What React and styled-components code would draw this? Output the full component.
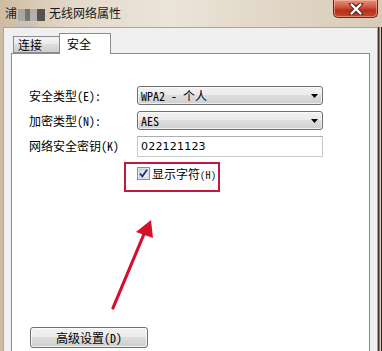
import React from "react";
import styled, { createGlobalStyle } from "styled-components";

const Global = createGlobalStyle`
  html, body { margin: 0; padding: 0; }
  body { width: 382px; height: 351px; overflow: hidden; background: #e2d8ca; }
  * { box-sizing: border-box; }
`;

const FONT = `"Noto Sans Mono CJK SC", "Noto Sans CJK SC", sans-serif`;

const Window = styled.div`
  width: 382px;
  height: 351px;
  display: flex;
  flex-direction: column;
  background: linear-gradient(90deg, #cdbca2 0%, #e4dacb 20%, #ebe4d9 45%, #e0d5c5 75%, #d8cbb8 100%);
  font-family: ${FONT};
  font-size: 12px;
  color: #000;
  overflow: hidden;
`;

const TitleBar = styled.div`
  height: 27px;
  flex: none;
  display: flex;
  align-items: center;
  padding-left: 5px;
  position: relative;
`;

const TitleText = styled.span`
  font-size: 12px;
  line-height: 14px;
  color: #1a1a1a;
  white-space: nowrap;
`;

const Mosaic = styled.span`
  display: inline-flex;
  width: 27px;
  height: 12px;
  margin: 0 4px 0 1px;
  vertical-align: middle;
  background: linear-gradient(90deg, #a9a6a2 0 25%, #77726e 25% 45%, #b3afaa 45% 70%, #55514f 70% 100%);
  filter: blur(0.6px);
`;

const Smear = styled.div`
  position: absolute;
  left: 14px;
  top: 23px;
  width: 24px;
  height: 10px;
  border-radius: 5px;
  background: rgba(190, 190, 190, 0.7);
  filter: blur(2px);
`;

const CloseButton = styled.div`
  margin-left: auto;
  margin-right: 4px;
  align-self: flex-start;
  width: 45px;
  height: 18px;
  border: 1px solid #5b2b22;
  border-top: none;
  border-radius: 0 0 5px 5px;
  background: linear-gradient(180deg, #e5937f 0%, #cf5a43 40%, #b6301c 60%, #c8452c 100%);
  display: flex;
  align-items: center;
  justify-content: center;
  box-shadow: inset 0 0 0 1px rgba(255, 200, 180, 0.5);
`;

const Frame = styled.div`
  flex: 1;
  display: flex;
  padding: 0 4px 0 3px;
  min-height: 0;
  position: relative;
  &::after {
    content: "";
    position: absolute;
    right: 0;
    top: 0;
    bottom: 0;
    width: 4px;
    background: linear-gradient(90deg, #3b3029 0 25%, #8c7b68 25% 50%, #d9ccb8 50% 75%, #2f2620 75% 100%);
  }
`;

const Client = styled.div`
  flex: 1;
  display: flex;
  flex-direction: column;
  background: #f0f0f0;
  border-top: 1px solid #a5a5a5;
  border-left: 1px solid #a5a5a5;
  border-right: 1px solid #a5a5a5;
  padding: 5px 7px 0 7px;
  min-height: 0;
`;

const TabRow = styled.div`
  height: 20px;
  flex: none;
  display: flex;
  align-items: flex-end;
  padding-left: 2px;
  position: relative;
  z-index: 2;
`;

const Tab = styled.div`
  height: ${(p) => (p.$active ? "21px" : "17px")};
  width: ${(p) => (p.$active ? "52px" : "47px")};
  margin-bottom: ${(p) => (p.$active ? "-1px" : "0")};
  margin-left: ${(p) => (p.$active ? "-1px" : "0")};
  border: 1px solid #898c95;
  border-bottom: ${(p) => (p.$active ? "none" : "1px solid #898c95")};
  background: ${(p) =>
    p.$active ? "#ffffff" : "linear-gradient(180deg, #f3f3f3 0%, #ebebeb 45%, #dddddd 50%, #cfcfcf 100%)"};
  display: flex;
  align-items: ${(p) => (p.$active ? "flex-start" : "center")};
  padding-left: ${(p) => (p.$active ? "7px" : "4px")};
  padding-top: ${(p) => (p.$active ? "3px" : "0")};
  font-size: 12px;
  line-height: 14px;
  position: relative;
`;

const Panel = styled.div`
  flex: 1;
  background: #ffffff;
  border: 1px solid #898c95;
  border-bottom: none;
  padding: 32px 0 0 17px;
  display: flex;
  flex-direction: column;
  align-items: flex-start;
  position: relative;
`;

const FormGrid = styled.div`
  display: grid;
  grid-template-columns: 108px 186px;
  row-gap: 6px;
  align-items: center;
`;

const Label = styled.span`
  font-size: 12px;
  line-height: 14px;
  white-space: nowrap;
  margin-top: ${(p) => p.$dy || 0}px;
`;

const Select = styled.div`
  height: 19px;
  border: 1px solid #707070;
  border-radius: 3px;
  background: linear-gradient(180deg, #f2f2f2 0%, #ebebeb 45%, #dddddd 50%, #cfcfcf 100%);
  display: flex;
  align-items: center;
  padding: 0 0 0 3px;
  font-size: 12px;
  line-height: 14px;
  box-shadow: inset 0 0 0 1px rgba(255, 255, 255, 0.6);
`;

const Arrow = styled.svg`
  margin-left: auto;
  margin-right: 4px;
`;

const Input = styled.div`
  height: 21px;
  border: 1px solid #c6c9cf;
  border-top-color: #abadb3;
  background: #fff;
  display: flex;
  align-items: center;
  padding-left: 3px;
  font-family: "DejaVu Sans", "Noto Sans", sans-serif;
  font-size: 11px;
  letter-spacing: 0.2px;
`;

const Highlight = styled.div`
  margin-top: 5px;
  margin-left: 95px;
  width: 96px;
  height: 30px;
  border: 2px solid #c3183e;
  padding: 3px 0 0 11px;
  display: flex;
  align-items: flex-start;
  gap: 2px;
`;

const CheckLabel = styled.span`
  font-size: 12px;
  line-height: 13px;
  white-space: nowrap;
`;

const Small = styled.span`
  font-size: 10px;
  letter-spacing: 0.5px;
`;

const Button = styled.div`
  margin-top: 135px;
  margin-left: 1px;
  width: 118px;
  height: 21px;
  border: 1px solid #707070;
  border-radius: 3px;
  background: linear-gradient(180deg, #f2f2f2 0%, #ebebeb 45%, #dddddd 50%, #cfcfcf 100%);
  box-shadow: inset 0 0 0 1px rgba(255, 255, 255, 0.7);
  display: flex;
  align-items: center;
  justify-content: center;
  font-size: 12px;
  line-height: 14px;
`;

const ArrowOverlay = styled.svg`
  position: absolute;
  left: 88px;
  top: 156px;
  pointer-events: none;
`;

function DropArrow() {
  return (
    <Arrow width="7" height="4" viewBox="0 0 7 4">
      <path d="M0 0 H7 L3.5 4 Z" fill="#000" />
    </Arrow>
  );
}

function CheckBox() {
  return (
    <svg width="13" height="13" viewBox="0 0 13 13" style={{ flex: "none" }}>
      <defs>
        <linearGradient id="cbg" x1="0" y1="0" x2="1" y2="1">
          <stop offset="0" stopColor="#cbd9ea" />
          <stop offset="1" stopColor="#f4f7fb" />
        </linearGradient>
      </defs>
      <rect x="0.5" y="0.5" width="12" height="12" fill="#f4f4f4" stroke="#8f8f8f" />
      <rect x="2" y="2" width="9" height="9" fill="url(#cbg)" stroke="#aeb8c6" strokeWidth="0.6" />
      <path d="M3 6.5 L5.3 9.5 L10 2.8" fill="none" stroke="#1e2c73" strokeWidth="1.8" strokeLinejoin="round" />
    </svg>
  );
}

export default function App() {
  return (
    <>
      <Global />
      <Window>
        <TitleBar>
          <TitleText>
            浦<Mosaic />无线网络属性
          </TitleText>
          <Smear />
          <CloseButton>
            <svg width="16" height="12" viewBox="0 0 16 12">
              <path
                d="M3 1 L8 5 L13 1 M3 11 L8 7 L13 11 M3 1 L13 11 M13 1 L3 11"
                stroke="#5a2018"
                strokeWidth="4"
                strokeLinecap="round"
                fill="none"
              />
              <path d="M3.5 1.5 L12.5 10.5 M12.5 1.5 L3.5 10.5" stroke="#ffffff" strokeWidth="2.4" strokeLinecap="round" />
            </svg>
          </CloseButton>
        </TitleBar>
        <Frame>
          <Client>
            <TabRow>
              <Tab>连接</Tab>
              <Tab $active>安全</Tab>
            </TabRow>
            <Panel>
              <FormGrid>
                <Label>安全类型(E):</Label>
                <Select>
                  WPA2 - 个人
                  <DropArrow />
                </Select>
                <Label>加密类型(N):</Label>
                <Select>
                  AES
                  <DropArrow />
                </Select>
                <Label $dy={-2}>网络安全密钥(K)</Label>
                <Input>022121123</Input>
              </FormGrid>
              <Highlight>
                <CheckBox />
                <CheckLabel>
                  显示字符<Small>(H)</Small>
                </CheckLabel>
              </Highlight>
              <Button>高级设置(D)</Button>
              <ArrowOverlay width="60" height="105" viewBox="0 0 60 105">
                <line x1="13" y1="98" x2="44" y2="24" stroke="#d4102c" strokeWidth="3.2" strokeLinecap="round" />
                <polygon points="51,10 36,22 53,28" fill="#d4102c" />
              </ArrowOverlay>
            </Panel>
          </Client>
        </Frame>
      </Window>
    </>
  );
}
